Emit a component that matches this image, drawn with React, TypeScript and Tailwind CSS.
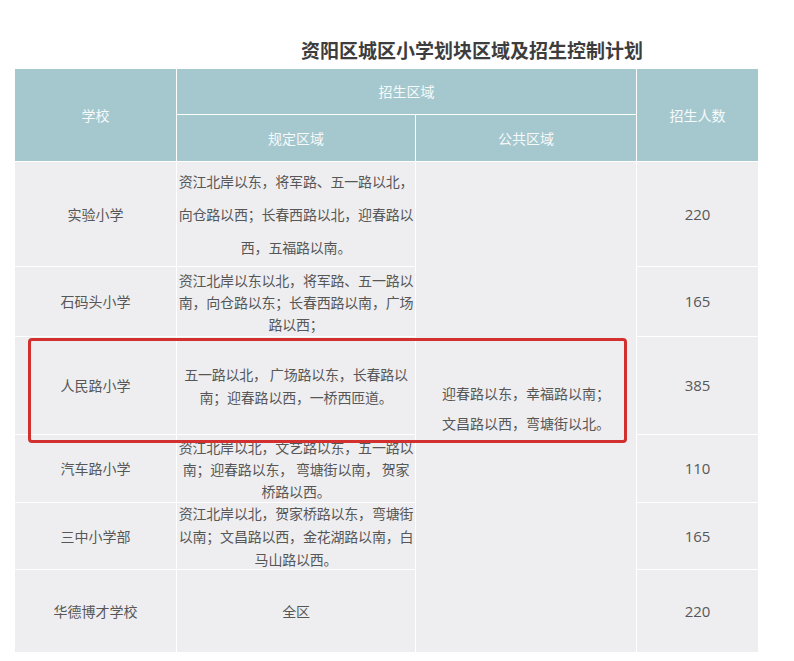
import React from 'react';

// 资阳区城区小学划块区域及招生控制计划

const cellBase = 'flex items-center justify-center text-center bg-[#eeeef0] text-[#575757]';
const headBase = 'flex items-center justify-center bg-[#a5c8cf] text-[#f6fafb]';

interface Row {
  school: string;
  area: string[];
  lead: string;
  count: string;
}

const rows: Row[] = [
  {
    school: '实验小学',
    area: ['资江北岸以东，将军路、五一路以北，', '向仓路以西；长春西路以北，迎春路以', '西，五福路以南。'],
    lead: 'leading-[33px]',
    count: '220',
  },
  {
    school: '石码头小学',
    area: ['资江北岸以东以北，将军路、五一路以', '南，向仓路以东；长春西路以南，广场', '路以西；'],
    lead: 'leading-[22px]',
    count: '165',
  },
  {
    school: '人民路小学',
    area: ['五一路以北， 广场路以东，长春路以', '南；迎春路以西，一桥西匝道。'],
    lead: 'leading-[23px]',
    count: '385',
  },
  {
    school: '汽车路小学',
    area: ['资江北岸以北，文艺路以东，五一路以', '南；迎春路以东， 弯塘街以南， 贺家', '桥路以西。'],
    lead: 'leading-[22px]',
    count: '110',
  },
  {
    school: '三中小学部',
    area: ['资江北岸以北，贺家桥路以东，弯塘街', '以南；文昌路以西，金花湖路以南，白', '马山路以西。'],
    lead: 'leading-[23px]',
    count: '165',
  },
  {
    school: '华德博才学校',
    area: ['全区'],
    lead: 'leading-[22px]',
    count: '220',
  },
];

export default function App() {
  return (
    <div
      className="relative w-[794px] h-[661px] bg-white overflow-hidden text-[14px]"
      style={{ fontFamily: '"Noto Sans CJK SC", "Noto Sans", sans-serif' }}
    >
      <div className="pt-[38px] pb-[7px] pl-[301px] leading-[24px] text-[19px] font-bold text-[#3d3d3d] tracking-[0px]">
        资阳区城区小学划块区域及招生控制计划
      </div>

      <div className="ml-[15px] grid grid-cols-[161px_238px_220px_121px] grid-rows-[45px_46px_104px_69px_97px_67px_66px_82px] gap-px">
        <div className={`${headBase} row-span-2`}>学校</div>
        <div className={`${headBase} col-span-2`}>招生区域</div>
        <div className={`${headBase} row-span-2`}>招生人数</div>
        <div className={headBase}>规定区域</div>
        <div className={headBase}>公共区域</div>

        {rows.map((r, i) => (
          <React.Fragment key={r.school}>
            <div className={`${cellBase} col-start-1`}>{r.school}</div>
            <div className={`${cellBase} col-start-2 ${r.lead} whitespace-nowrap tracking-[-0.2px]`}>
              <div>
                {r.area.map((line) => (
                  <span key={line} className="block">{line}</span>
                ))}
              </div>
            </div>
            {i === 0 && (
              <div className={`${cellBase} col-start-3 row-span-6 leading-[30px] pt-[1px]`}>
                <div>
                  <span className="block">迎春路以东，幸福路以南；</span>
                  <span className="block">文昌路以西，弯塘街以北。</span>
                </div>
              </div>
            )}
            <div
              className={`${cellBase} col-start-4 text-[15px] text-[#555]`}
              style={{ fontFamily: '"Open Sans", "Noto Sans", sans-serif' }}
            >
              {r.count}
            </div>
          </React.Fragment>
        ))}
      </div>

      {/* red highlight box */}
      <div className="absolute left-[28px] top-[338px] w-[599px] h-[105px] border-[3px] border-[#d2302e] rounded-[4px]" />
    </div>
  );
}
